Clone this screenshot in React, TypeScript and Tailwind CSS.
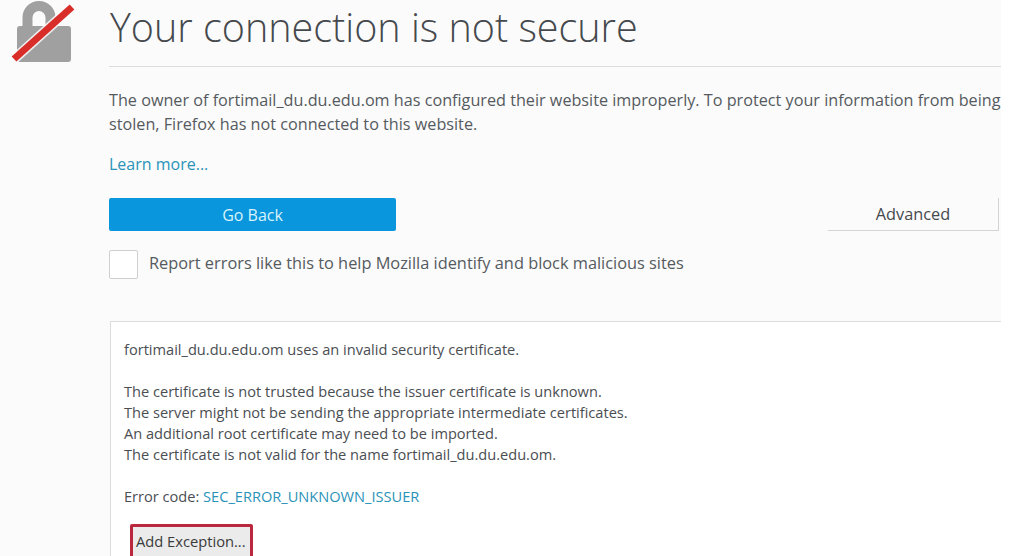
import React from 'react';

const LockIcon = () => (
  <svg width="68" height="64" viewBox="0 0 68 64" className="shrink-0">
    <path d="M17.5 28V17.5A11.5 11.5 0 0 1 40.5 17.5V28" fill="none" stroke="#a0a0a0" strokeWidth="10" />
    <rect x="7" y="26" width="54" height="36" rx="3" fill="#a0a0a0" />
    <path d="M3 60 L63 6" stroke="#fbfbfb" strokeWidth="10" fill="none" opacity="0.85" />
    <path d="M4 59 L62 7" stroke="#d92d2a" strokeWidth="7" fill="none" />
  </svg>
);

const App = () => {
  return (
    <div className="w-[1024px] h-[556px] bg-white overflow-hidden font-['Open_Sans','Liberation_Sans',sans-serif]">
      <div className="w-[1001px] h-[556px] bg-[#fbfbfb] overflow-hidden flex">
        <div className="w-[109px] shrink-0 pl-[10px]">
          <LockIcon />
        </div>
        <div className="w-[892px] shrink-0">
          <div className="h-[67px] border-b border-[#dcdcdc]">
            <h1 className="pl-[1px] text-[39.5px] leading-[54px] font-light text-[#45494d] whitespace-nowrap">Your connection is not secure</h1>
          </div>
          <p className="mt-[22px] text-[16.2px] leading-[23.5px] text-[#555a60] whitespace-nowrap">
            The owner of fortimail_du.du.edu.om has configured their website improperly. To protect your information from being
            <br />
            stolen, Firefox has not connected to this website.
          </p>
          <a className="block mt-[17px] text-[16px] leading-[23px] text-[#2a93b8]">Learn more...</a>
          <div className="mt-[22px] flex items-start justify-between pr-[2px]">
            <button className="w-[287px] h-[33px] bg-[#0996dd] rounded-[2px] pt-[1px] text-[16px] text-[#d9f3fb]">Go Back</button>
            <button className="w-[171px] h-[33px] bg-[#fbfbfb] border-b border-r border-[#d4d4d4] pt-[1px] text-[16.3px] text-[#45494d]">Advanced</button>
          </div>
          <label className="mt-[19px] flex items-center gap-[11px]">
            <span className="w-[29px] h-[29px] bg-white border border-[#cfcfcf] rounded-[2px]" />
            <span className="text-[16.35px] text-[#555a60] whitespace-nowrap -mt-[3px]">Report errors like this to help Mozilla identify and block malicious sites</span>
          </label>
          <div className="mt-[42px] ml-[1px] h-[240px] bg-white border-t border-l border-[#dcdcdc] pl-[13px] pt-[17px] text-[14.6px] leading-[21px] text-[#4a4e52] whitespace-nowrap">
            <p>fortimail_du.du.edu.om uses an invalid security certificate.</p>
            <p className="mt-[21px]">The certificate is not trusted because the issuer certificate is unknown.</p>
            <p>The server might not be sending the appropriate intermediate certificates.</p>
            <p>An additional root certificate may need to be imported.</p>
            <p>The certificate is not valid for the name fortimail_du.du.edu.om.</p>
            <p className="mt-[21px]">Error code: <span className="text-[#2a93b8]">SEC_ERROR_UNKNOWN_ISSUER</span></p>
            <button className="mt-[17px] ml-[6px] w-[123px] h-[40px] bg-[#ebebeb] border-[3px] border-[#b9283c] rounded-[2px] text-[14.7px] text-[#3a3a3a] text-left pl-[3px] pb-[6px]">Add Exception...</button>
          </div>
        </div>
      </div>
    </div>
  );
};

export default App;
